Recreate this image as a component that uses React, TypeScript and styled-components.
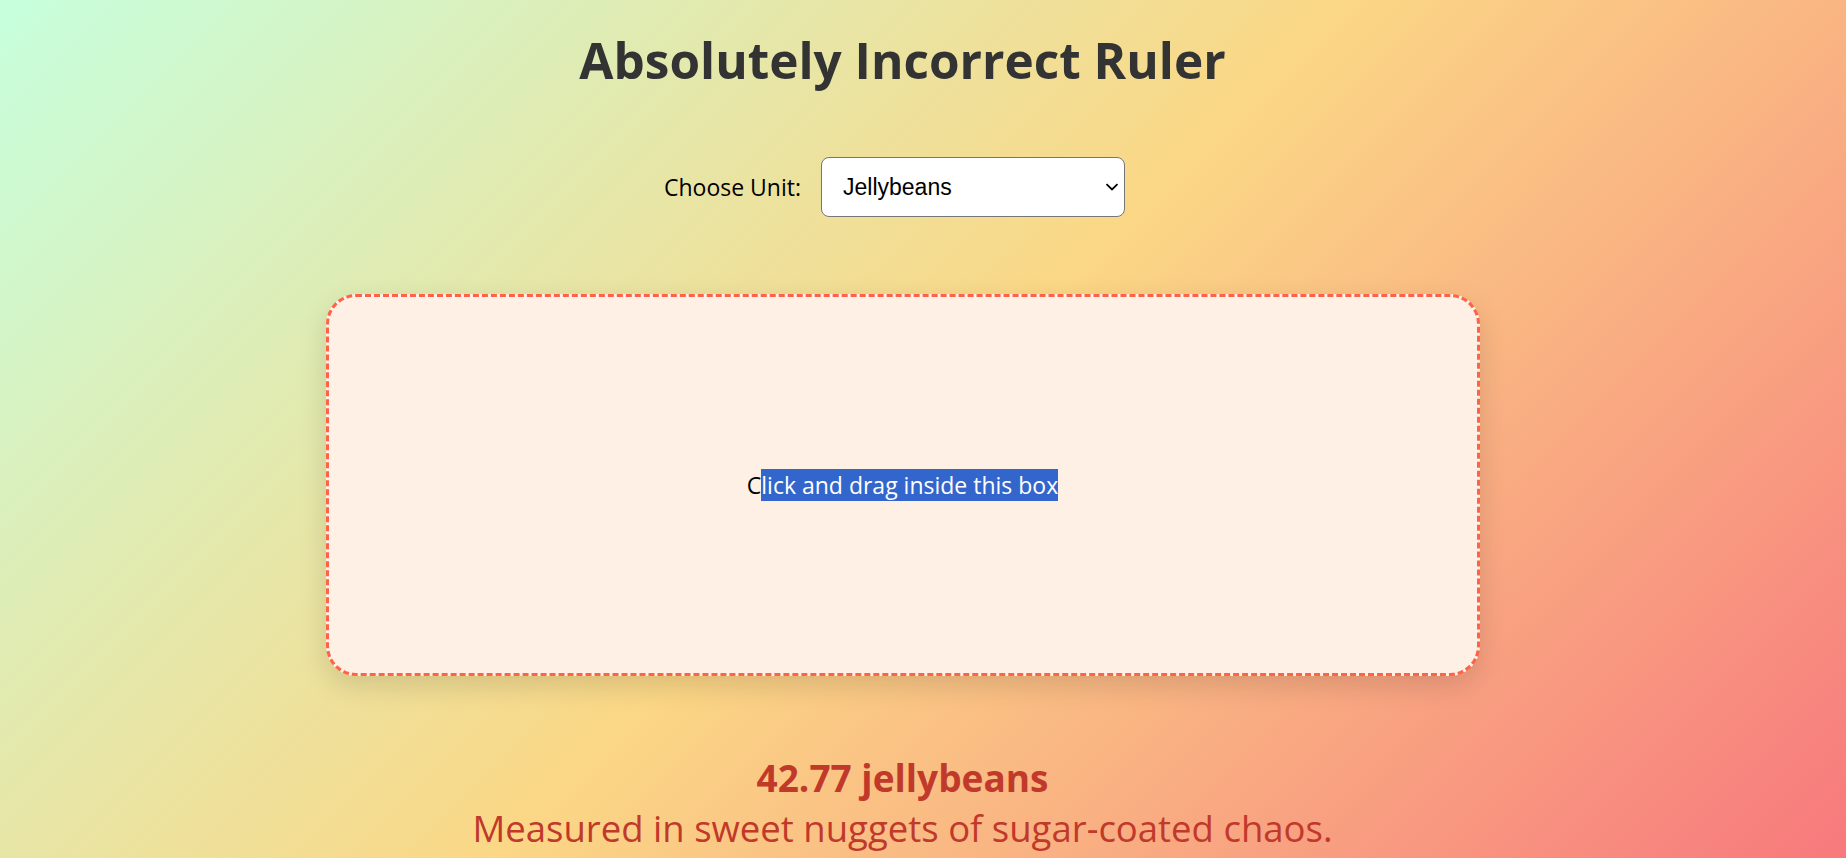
import { useState } from "react";
import styled, { createGlobalStyle } from "styled-components";

const GlobalStyle = createGlobalStyle`
    html, body {
        margin: 0;
        padding: 0;
    }
    body {
        font-family: "Open Sans", "Noto Sans", sans-serif;
    }
`;

const Page = styled.div`
    min-height: 100vh;
    box-sizing: border-box;
    padding-right: 41px;
    display: flex;
    flex-direction: column;
    align-items: center;
    background: linear-gradient(135deg, #c6ffdd, #fbd786, #f7797d);
`;

const Title = styled.h1`
    margin: 26px 0 0;
    font-size: 49.5px;
    font-weight: 700;
    line-height: normal;
    color: #333333;
`;

const UnitRow = styled.div`
    display: flex;
    align-items: center;
    gap: 20px;
    margin-top: 63px;
    padding-right: 16px;
`;

const Label = styled.label`
    font-size: 23px;
    color: #000000;
`;

const SelectWrap = styled.div`
    position: relative;
    display: flex;
`;

const Select = styled.select`
    appearance: none;
    width: 304px;
    height: 60px;
    box-sizing: border-box;
    padding: 0 40px 0 21px;
    font-family: "Liberation Sans", Arial, sans-serif;
    font-size: 23px;
    color: #000000;
    background: #ffffff;
    border: 1px solid #767676;
    border-radius: 8px;
    outline: none;
`;

const Chevron = styled.svg`
    position: absolute;
    right: 6px;
    top: 50%;
    margin-top: -4px;
    pointer-events: none;
`;

const MeasureBox = styled.div`
    width: 1154px;
    height: 382px;
    margin-top: 77px;
    box-sizing: border-box;
    display: flex;
    align-items: center;
    justify-content: center;
    border: 3px dashed #ff6347;
    border-radius: 30px;
    background: #fef0e5;
    box-shadow: 0 10px 28px rgba(0, 0, 0, 0.13);
    font-size: 23px;
    color: #000000;
    cursor: crosshair;
`;

const Selected = styled.span`
    background: #3366cc;
    color: #ffffff;
`;

const Result = styled.div`
    margin-top: 76px;
    text-align: center;
    color: #c0392b;
`;

const Amount = styled.div`
    font-size: 37px;
    font-weight: 700;
    line-height: normal;
`;

const Caption = styled.div`
    font-size: 36.5px;
    line-height: normal;
`;

const units: Record<string, { name: string; perPx: number; blurb: string }> = {
    jellybeans: { name: "jellybeans", perPx: 0.0371, blurb: "Measured in sweet nuggets of sugar-coated chaos." },
    bananas: { name: "bananas", perPx: 0.0052, blurb: "The one true scale, as the internet agreed." },
    hamsters: { name: "hamsters", perPx: 0.0089, blurb: "Fluffy, round, and never standing still." },
    spaghetti: { name: "spaghetti strands", perPx: 0.0031, blurb: "Uncooked, for accuracy. Mostly." },
};

const App = () => {
    const [unit, setUnit] = useState("jellybeans");
    const [pixels, setPixels] = useState(1152.8);
    const [start, setStart] = useState<{ x: number; y: number } | null>(null);
    const current = units[unit];

    return (
        <Page>
            <GlobalStyle />
            <Title>Absolutely Incorrect Ruler</Title>
            <UnitRow>
                <Label htmlFor="unit">Choose Unit:</Label>
                <SelectWrap>
                    <Select id="unit" value={unit} onChange={(e) => setUnit(e.target.value)}>
                        <option value="jellybeans">Jellybeans</option>
                        <option value="bananas">Bananas</option>
                        <option value="hamsters">Hamsters</option>
                        <option value="spaghetti">Spaghetti</option>
                    </Select>
                    <Chevron width="14" height="8" viewBox="0 0 14 8">
                        <polyline points="1.5,1.2 7,6.5 12.5,1.2" fill="none" stroke="#000" strokeWidth="1.8" />
                    </Chevron>
                </SelectWrap>
            </UnitRow>
            <MeasureBox
                onMouseDown={(e) => setStart({ x: e.clientX, y: e.clientY })}
                onMouseMove={(e) => {
                    if (start) setPixels(Math.hypot(e.clientX - start.x, e.clientY - start.y));
                }}
                onMouseUp={() => setStart(null)}
            >
                <span>
                    C<Selected>lick and drag inside this box</Selected>
                </span>
            </MeasureBox>
            <Result>
                <Amount>
                    {(pixels * current.perPx).toFixed(2)} {current.name}
                </Amount>
                <Caption>{current.blurb}</Caption>
            </Result>
        </Page>
    );
};

export default App;
